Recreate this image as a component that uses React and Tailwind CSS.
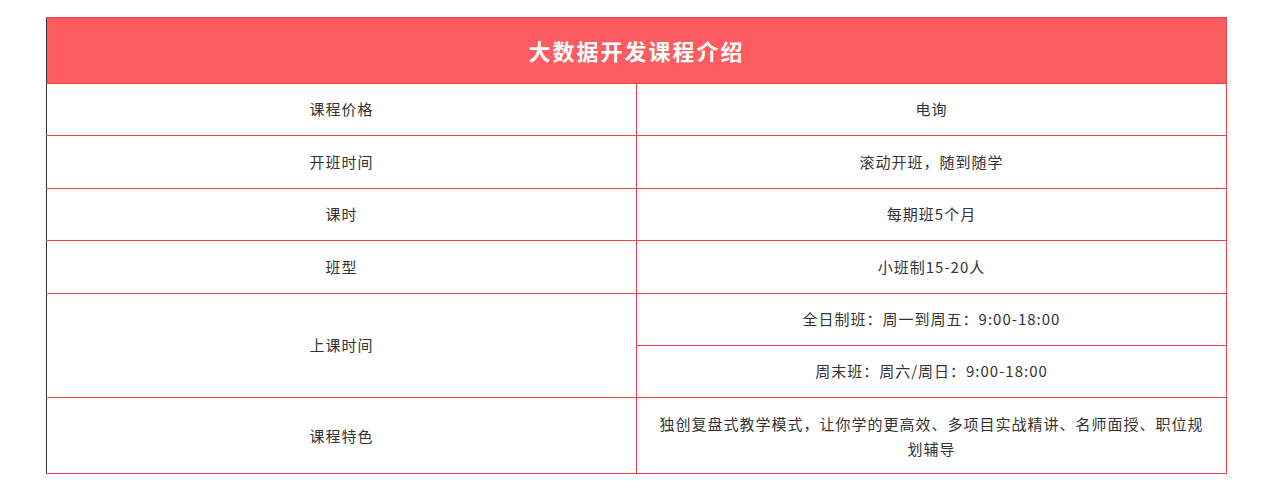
// App.jsx
import React from 'react';

const rows = [
  { label: '课程价格', values: ['电询'] },
  { label: '开班时间', values: ['滚动开班，随到随学'] },
  { label: '课时', values: ['每期班5个月'] },
  { label: '班型', values: ['小班制15-20人'] },
  { label: '上课时间', values: ['全日制班：周一到周五：9:00-18:00', '周末班：周六/周日：9:00-18:00'] },
];

const cell = 'border border-[#f2424a] text-center text-[15px] tracking-[1px] text-[#333] font-normal';

const App = () => {
  return (
    <div
      className="w-[1280px] h-[499px] bg-white pt-[17px] pl-[46px]"
      style={{ fontFamily: '"Microsoft YaHei", "Noto Sans CJK SC", sans-serif' }}
    >
      <table className="w-[1181px] border-collapse table-fixed">
        <thead>
          <tr>
            <th
              colSpan={2}
              className="h-[66px] bg-[#fc5c60] border border-[#f2424a] border-l-[#333] text-white text-[22px] tracking-[2px] font-bold"
            >
              大数据开发课程介绍
            </th>
          </tr>
        </thead>
        <tbody>
          {rows.map((row) =>
            row.values.map((v, i) => (
              <tr key={row.label + i}>
                {i === 0 && (
                  <td rowSpan={row.values.length} className={`${cell} w-1/2 border-l-[#333] h-[52.4px]`}>
                    {row.label}
                  </td>
                )}
                <td className={`${cell} h-[52.4px]`}>{v}</td>
              </tr>
            ))
          )}
          <tr>
            <td className={`${cell} border-l-[#333] h-[76px]`}>课程特色</td>
            <td className={`${cell} h-[76px] px-[18px] leading-[25px]`}>
              独创复盘式教学模式，让你学的更高效、多项目实战精讲、名师面授、职位规划辅导
            </td>
          </tr>
        </tbody>
      </table>
    </div>
  );
};

export default App;
